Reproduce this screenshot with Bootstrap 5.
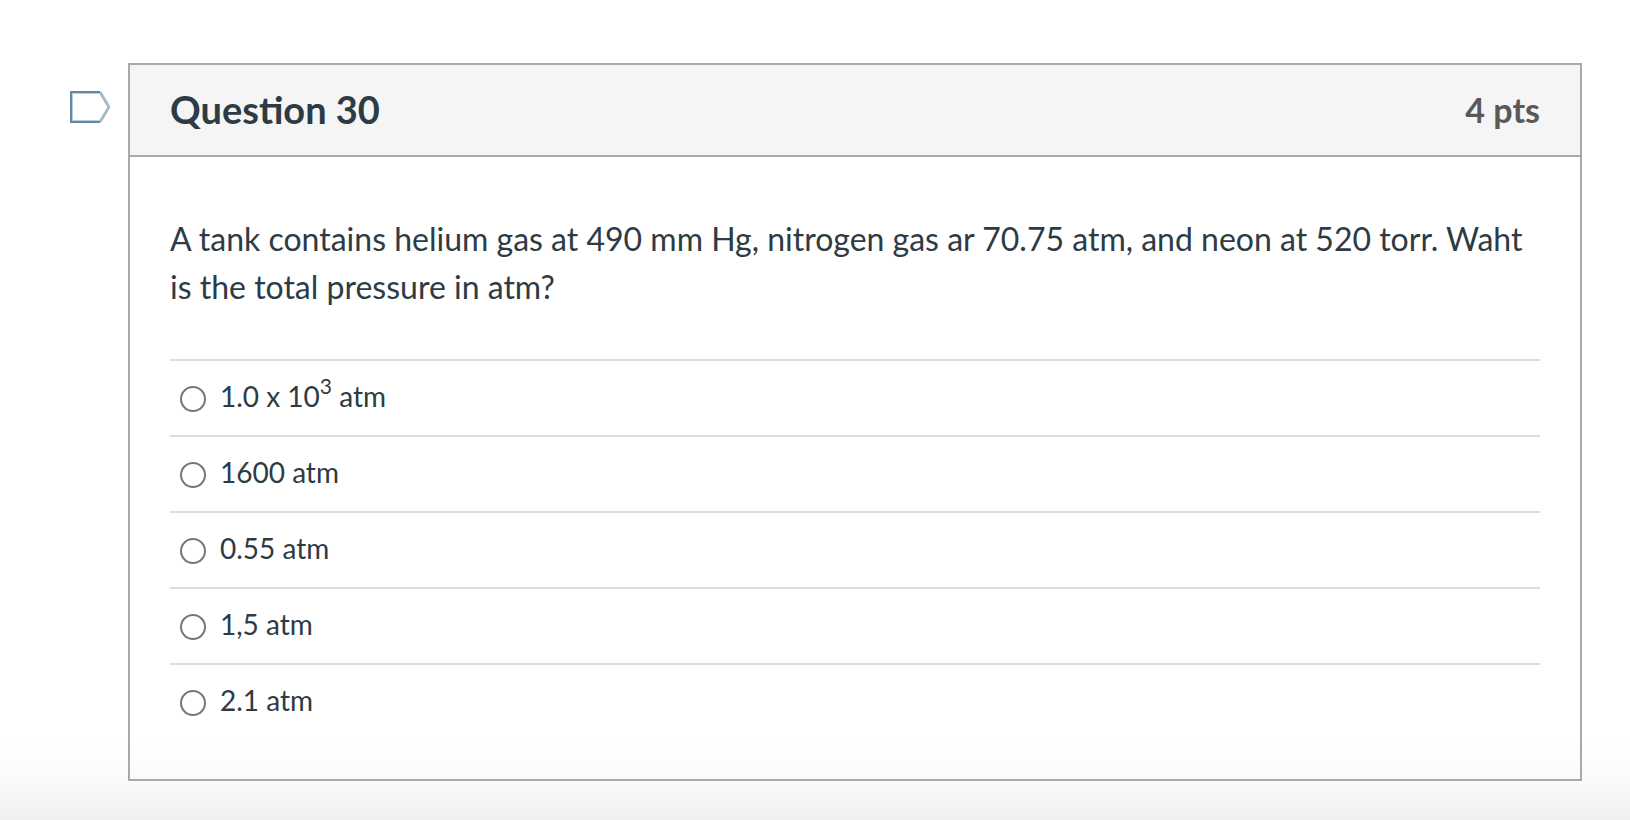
<!DOCTYPE html>
<html lang="en">
<head>
<meta charset="utf-8">
<meta name="viewport" content="width=device-width, initial-scale=1">
<title>Question 30</title>
<link href="https://cdn.jsdelivr.net/npm/bootstrap@5.3.0/dist/css/bootstrap.min.css" rel="stylesheet">
<style>
  body {
    font-family: Lato, "Liberation Sans", sans-serif;
    color: #2d3b45;
    background: #fff linear-gradient(to top, #f0f0f0, #fafafa 36px, #fff 80px) no-repeat;
  }
  .quiz-page { padding: 63px 48px 39px 70px; gap: 18px; }
  .flag-toggle { margin-top: 28px; line-height: 0; }
  .question-card { border: 2px solid #a9a9a9; }
  .question-head { background: #f5f5f5; border-bottom: 2px solid #a9a9a9; padding: 16px 40px; }
  .question-title { font-size: 38px; line-height: 56px; }
  .question-points { font-size: 34px; line-height: 58px; color: #595959; }
  .question-body { padding: 58px 40px 40px; }
  .question-text { font-size: 32px; line-height: 48px; margin-bottom: 48px; }
  .answer-row { border-top: 2px solid #ddd; padding: 14px 10px 18px; gap: 14px; }
  .answer-row label { font-size: 28px; line-height: 42px; }
  .answer-row sup { font-size: 21px; line-height: 0; top: -.6em; }
  .answer-row .form-check-input { width: 26px; height: 26px; margin: 11px 0 0; border: 2px solid #767676; background-color: #fff; }
  .answer-row .form-check-input:checked { background-color: #0d6efd; }
</style>
</head>
<body class="min-vh-100">
<main class="quiz-page d-flex align-items-start">
  <button type="button" class="flag-toggle btn p-0 border-0 rounded-0 flex-shrink-0" aria-label="Flag question 30">
    <svg width="40" height="32" viewBox="0 0 40 32" fill="none" aria-hidden="true">
      <path d="M30 1 39 16 30 31" stroke="#a3b9c8" stroke-width="2.800"/>
      <path d="M30 2.500H2.500V29.500H30" stroke="#bccdd9" stroke-width="1"/>
      <path d="M30 1H1V31H30" stroke="#6388a2" stroke-width="2"/>
    </svg>
  </button>
  <section class="question-card flex-grow-1">
    <header class="question-head d-flex justify-content-between align-items-start">
      <h1 class="question-title fw-bold mb-0">Question 30</h1>
      <span class="question-points fw-bold">4 pts</span>
    </header>
    <form class="question-body">
      <p class="question-text">A tank contains helium gas at 490 mm Hg, nitrogen gas ar 70.75 atm, and neon at 520 torr. Waht is the total pressure in atm?</p>
      <div role="radiogroup" aria-label="Answers">
        <div class="answer-row d-flex align-items-start">
          <input class="form-check-input flex-shrink-0" type="radio" name="answer" id="answer1">
          <label for="answer1">1.0 x 10<sup>3</sup> atm</label>
        </div>
        <div class="answer-row d-flex align-items-start">
          <input class="form-check-input flex-shrink-0" type="radio" name="answer" id="answer2">
          <label for="answer2">1600 atm</label>
        </div>
        <div class="answer-row d-flex align-items-start">
          <input class="form-check-input flex-shrink-0" type="radio" name="answer" id="answer3">
          <label for="answer3">0.55 atm</label>
        </div>
        <div class="answer-row d-flex align-items-start">
          <input class="form-check-input flex-shrink-0" type="radio" name="answer" id="answer4">
          <label for="answer4">1,5 atm</label>
        </div>
        <div class="answer-row d-flex align-items-start">
          <input class="form-check-input flex-shrink-0" type="radio" name="answer" id="answer5">
          <label for="answer5">2.1 atm</label>
        </div>
      </div>
    </form>
  </section>
</main>
<script src="https://cdn.jsdelivr.net/npm/bootstrap@5.3.0/dist/js/bootstrap.bundle.min.js"></script>
</body>
</html>
